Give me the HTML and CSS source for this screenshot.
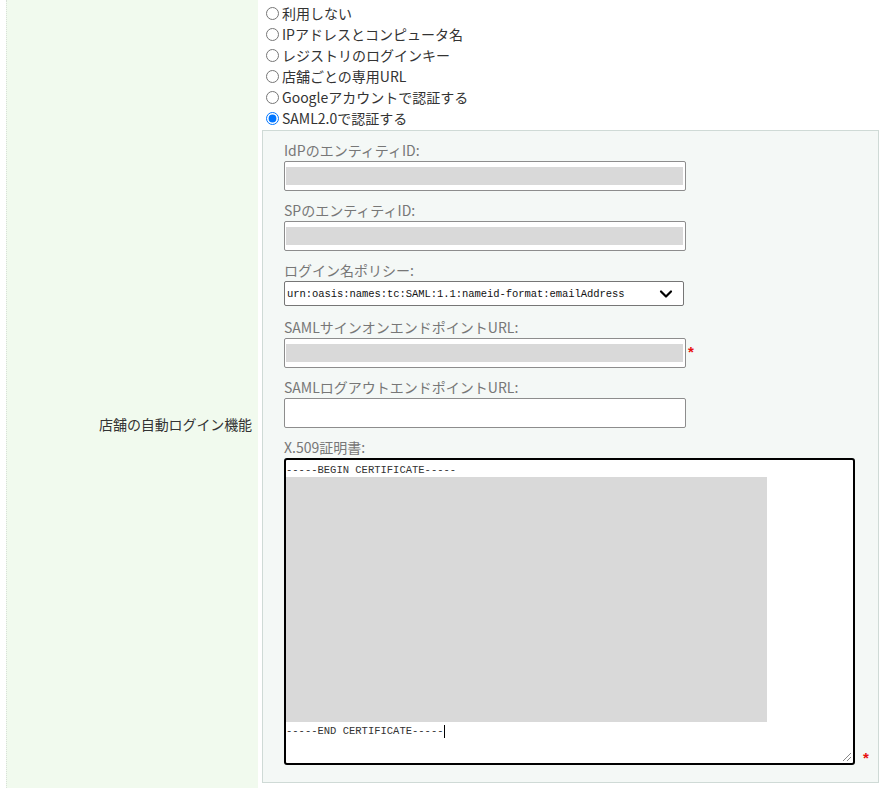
FILE: index.html
```html
<!DOCTYPE html>
<html lang="ja">
<head>
<meta charset="utf-8">
<title>店舗の自動ログイン機能</title>
<link rel="stylesheet" href="styles.css">
</head>
<body>
<div class="row">
  <div class="label-cell">店舗の自動ログイン機能</div>
  <div class="value-cell">
    <div class="radios">
      <label class="radio"><input type="radio" name="login">利用しない</label>
      <label class="radio"><input type="radio" name="login">IPアドレスとコンピュータ名</label>
      <label class="radio"><input type="radio" name="login">レジストリのログインキー</label>
      <label class="radio"><input type="radio" name="login">店舗ごとの専用URL</label>
      <label class="radio"><input type="radio" name="login">Googleアカウントで認証する</label>
      <label class="radio"><input type="radio" name="login" checked>SAML2.0で認証する</label>
    </div>
    <div class="panel">
      <div class="group">
        <div class="flabel">IdPのエンティティID:</div>
        <div class="field"><div class="redact"></div></div>
      </div>
      <div class="group">
        <div class="flabel">SPのエンティティID:</div>
        <div class="field"><div class="redact"></div></div>
      </div>
      <div class="group g-select">
        <div class="flabel">ログイン名ポリシー:</div>
        <div class="select">
          <span class="select-text">urn:oasis:names:tc:SAML:1.1:nameid-format:emailAddress</span>
          <svg class="chev" width="14" height="10" viewBox="0 0 14 10"><path d="M2 2.5 L7 7.5 L12 2.5" fill="none" stroke="#000" stroke-width="2.2" stroke-linecap="round" stroke-linejoin="round"/></svg>
        </div>
      </div>
      <div class="group">
        <div class="flabel">SAMLサインオンエンドポイントURL:</div>
        <div class="with-req">
          <div class="field"><div class="redact"></div></div>
          <span class="req">*</span>
        </div>
      </div>
      <div class="group">
        <div class="flabel">SAMLログアウトエンドポイントURL:</div>
        <div class="field"></div>
      </div>
      <div class="group g-last">
        <div class="flabel">X.509証明書:</div>
        <div class="with-req req-bottom">
          <div class="cert">
            <div class="mono-line">-----BEGIN CERTIFICATE-----</div>
            <div class="cert-redact"></div>
            <div class="mono-line">-----END CERTIFICATE-----<span class="caret"></span></div>
            <svg class="grip" width="12" height="12" viewBox="0 0 12 12"><path d="M11 3 L3 11 M11 7 L7 11" stroke="#888" stroke-width="1"/></svg>
          </div>
          <span class="req">*</span>
        </div>
      </div>
    </div>
  </div>
</div>
</body>
</html>
```
FILE: styles.css
```css
html, body {
  margin: 0;
  padding: 0;
  background: #fff;
}
body {
  font-family: "Noto Sans CJK JP", "Noto Sans", sans-serif;
  font-size: 14px;
  color: #333;
}
.row {
  display: flex;
  margin-left: 6px;
  min-height: 788px;
}
.label-cell {
  width: 245px;
  flex: none;
  background: #f1faee;
  border-left: 1px dotted #d8e0d8;
  display: flex;
  align-items: center;
  justify-content: flex-end;
  padding: 60px 6px 0 0;
  font-size: 14px;
  color: #333;
  letter-spacing: -0.1px;
}
.value-cell {
  flex: 1;
  padding: 3px 5px 5px 4px;
}
.radios {
  padding-left: 4px;
}
.radio {
  display: flex;
  align-items: center;
  height: 21px;
  line-height: 21px;
  color: #333;
}
.radio input {
  width: 13px;
  height: 13px;
  margin: 0 3px 0 0;
}
.panel {
  margin-top: 1px;
  background: #f4f8f6;
  border: 1px solid #cfdad6;
  padding: 9px 0 17px 21px;
}
.group {
  margin-bottom: 9px;
}
.g-select {
  margin-bottom: 11px;
}
.g-last {
  margin-bottom: 0;
}
.flabel {
  line-height: 20px;
  height: 20px;
  color: #777;
  font-size: 14px;
  margin-bottom: 1px;
}
.field {
  box-sizing: border-box;
  width: 402px;
  height: 30px;
  border: 1px solid #8d8d8d;
  border-radius: 2px;
  background: #fff;
  padding: 5px 2px 5px 1px;
}
.redact {
  height: 18px;
  background: #d9d9d9;
}
.select {
  box-sizing: border-box;
  width: 400px;
  height: 25px;
  margin-top: 1px;
  border: 1px solid #767676;
  border-radius: 2px;
  background: #fff;
  display: flex;
  align-items: center;
  justify-content: space-between;
  padding: 0 10px 0 2px;
}
.select-text {
  font-family: "Liberation Mono", "DejaVu Sans Mono", monospace;
  font-size: 10.5px;
  color: #111;
  letter-spacing: -0.05px;
}
.chev {
  display: block;
}
.with-req {
  display: flex;
  align-items: center;
}
.with-req .req {
  color: #e8110f;
  font-family: "Liberation Sans", sans-serif;
  font-weight: bold;
  font-size: 15px;
  line-height: 1;
  margin-left: 2px;
  margin-top: -4px;
}
.req-bottom {
  align-items: flex-end;
}
.req-bottom .req {
  margin-left: 8px;
  margin-bottom: 0;
}
.cert {
  position: relative;
  box-sizing: border-box;
  width: 571px;
  height: 307px;
  border: 2px solid #000;
  border-radius: 3px;
  background: #fff;
  padding: 3px 0 0 0;
}
.mono-line {
  font-family: "Liberation Mono", "DejaVu Sans Mono", monospace;
  font-size: 10.5px;
  line-height: 14px;
  height: 14px;
  color: #333;
  white-space: pre;
  display: flex;
  align-items: center;
}
.caret {
  display: inline-block;
  width: 1px;
  height: 13px;
  background: #000;
}
.cert-redact {
  width: 481px;
  height: 245px;
  background: #d9d9d9;
  margin-bottom: 2px;
}
.grip {
  position: absolute;
  right: 1px;
  bottom: 1px;
}
```
